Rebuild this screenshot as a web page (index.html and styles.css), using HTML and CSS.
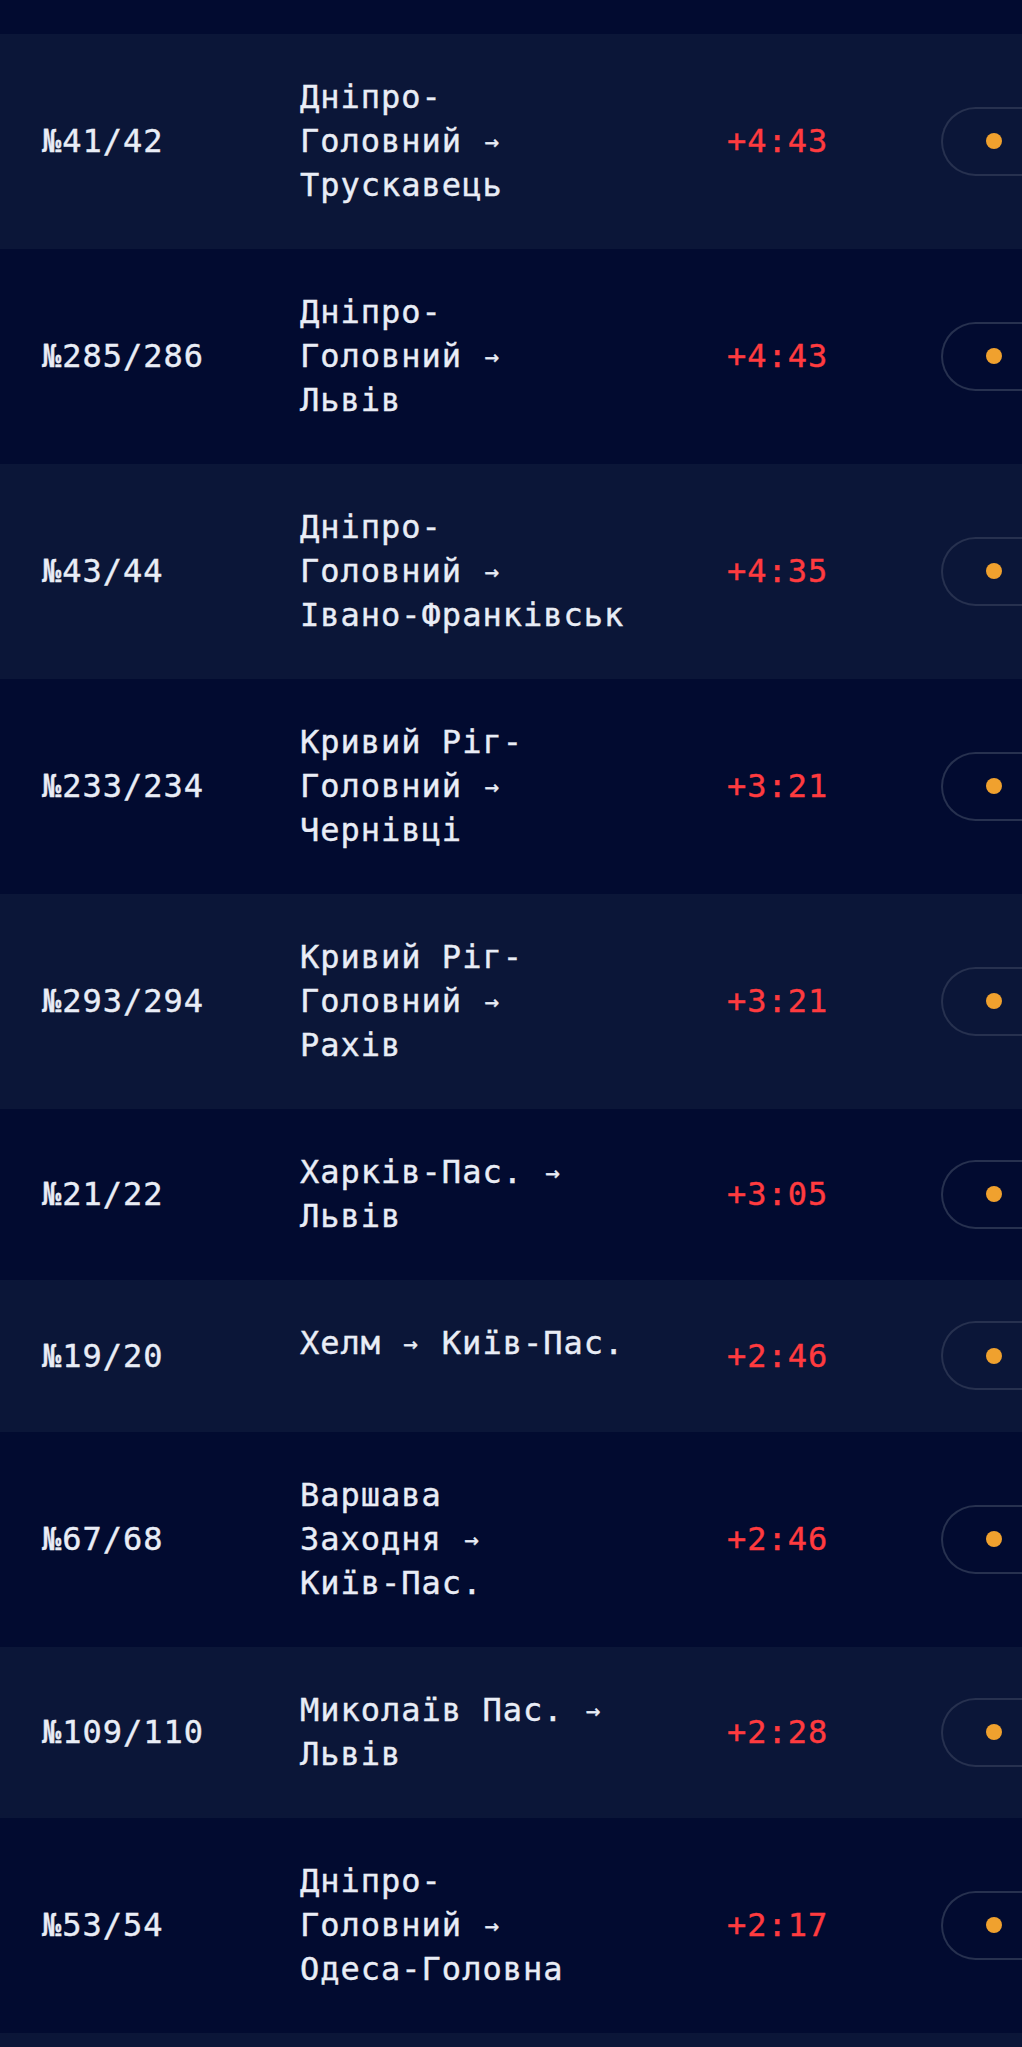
FILE: index.html
```html
<!DOCTYPE html>
<html lang="uk">
<head>
  <meta charset="UTF-8">
  <title>Затримки потягів</title>
  <link rel="stylesheet" href="styles.css">
</head>
<body>
  <div class="board">
    <div class="row edge-top"></div>

    <div class="row light">
      <div class="num">№41/42</div>
      <div class="route">Дніпро-Головний&nbsp;<span class="arr">→</span> <span class="to">Трускавець</span></div>
      <div class="delay">+4:43</div>
      <div class="status"><span class="dot"></span></div>
    </div>

    <div class="row">
      <div class="num">№285/286</div>
      <div class="route">Дніпро-Головний&nbsp;<span class="arr">→</span> <span class="to">Львів</span></div>
      <div class="delay">+4:43</div>
      <div class="status"><span class="dot"></span></div>
    </div>

    <div class="row light">
      <div class="num">№43/44</div>
      <div class="route">Дніпро-Головний&nbsp;<span class="arr">→</span> <span class="to">Івано-Франківськ</span></div>
      <div class="delay">+4:35</div>
      <div class="status"><span class="dot"></span></div>
    </div>

    <div class="row">
      <div class="num">№233/234</div>
      <div class="route">Кривий Ріг-Головний&nbsp;<span class="arr">→</span> <span class="to">Чернівці</span></div>
      <div class="delay">+3:21</div>
      <div class="status"><span class="dot"></span></div>
    </div>

    <div class="row light">
      <div class="num">№293/294</div>
      <div class="route">Кривий Ріг-Головний&nbsp;<span class="arr">→</span> <span class="to">Рахів</span></div>
      <div class="delay">+3:21</div>
      <div class="status"><span class="dot"></span></div>
    </div>

    <div class="row">
      <div class="num">№21/22</div>
      <div class="route">Харків-Пас.&nbsp;<span class="arr">→</span> <span class="to">Львів</span></div>
      <div class="delay">+3:05</div>
      <div class="status"><span class="dot"></span></div>
    </div>

    <div class="row light">
      <div class="num">№19/20</div>
      <div class="route">Хелм&nbsp;<span class="arr">→</span> Київ-Пас.</div>
      <div class="delay">+2:46</div>
      <div class="status"><span class="dot"></span></div>
    </div>

    <div class="row">
      <div class="num">№67/68</div>
      <div class="route">Варшава Заходня&nbsp;<span class="arr">→</span> <span class="to">Київ-Пас.</span></div>
      <div class="delay">+2:46</div>
      <div class="status"><span class="dot"></span></div>
    </div>

    <div class="row light">
      <div class="num">№109/110</div>
      <div class="route">Миколаїв Пас.&nbsp;<span class="arr">→</span> <span class="to">Львів</span></div>
      <div class="delay">+2:28</div>
      <div class="status"><span class="dot"></span></div>
    </div>

    <div class="row">
      <div class="num">№53/54</div>
      <div class="route">Дніпро-Головний&nbsp;<span class="arr">→</span> <span class="to">Одеса-Головна</span></div>
      <div class="delay">+2:17</div>
      <div class="status"><span class="dot"></span></div>
    </div>

    <div class="row light edge-bottom"></div>
  </div>
</body>
</html>
```

FILE: styles.css
```css
body {
  margin: 0;
  background: #0b1638;
  overflow: hidden;
  font-family: "DejaVu Sans Mono", "Liberation Mono", monospace;
  font-size: 32px;
  letter-spacing: 1px;
  line-height: 44px;
  color: #e9edf6;
  -webkit-text-stroke: 0.4px currentColor;
}
.board {
  width: 1022px;
}
.row {
  display: grid;
  grid-template-columns: 258px 427px 214px 1fr;
  align-items: center;
  padding: 41px 0 42px 42px;
  min-height: 69px;
  background: #020b30;
}
.row.light {
  background: #0b1638;
}
.edge-top {
  padding: 0;
  min-height: 0;
  height: 34px;
}
.edge-bottom {
  padding: 0;
  min-height: 0;
  height: 15px;
}
.num {
  white-space: nowrap;
}
.route {
  align-self: start;
  width: 335px;
}
.arr {
  font-size: 24px;
  line-height: 1;
  padding-left: 2px;
  letter-spacing: 3.8px;
  vertical-align: 2px;
}
.to {
  display: block;
  white-space: nowrap;
}
.delay {
  color: #ff3b3f;
}
.status {
  display: flex;
  align-items: center;
  padding-left: 43px;
  width: 140px;
  height: 65px;
  border: 2px solid #27314f;
  border-right: none;
  border-radius: 35px 0 0 35px;
  box-sizing: content-box;
  -webkit-text-stroke: 0;
}
.dot {
  width: 16px;
  height: 16px;
  border-radius: 50%;
  background: #f0a12e;
}
```
